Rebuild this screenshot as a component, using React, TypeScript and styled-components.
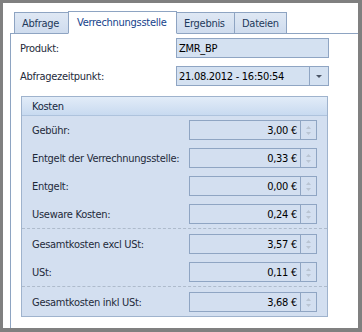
import React from "react";
import styled, { createGlobalStyle } from "styled-components";

const FONT = `"DejaVu Sans Condensed", "DejaVu Sans", sans-serif`;

const Global = createGlobalStyle`
  html, body { margin: 0; padding: 0; background: #ffffff; }
  body { font-family: ${FONT}; font-size: 11px; letter-spacing: -0.28px; }
`;

const Frame = styled.div`
  width: 362px;
  height: 332px;
  box-sizing: border-box;
  border-style: solid;
  border-color: #808080;
  border-width: 3px 4px 4px 3px;
  background: #ffffff;
  overflow: hidden;
  display: flex;
  flex-direction: column;
  padding: 8px 0 0 7px;
`;

const TabStrip = styled.div`
  display: flex;
  align-items: flex-end;
  padding-left: 4px;
  height: 22px;
  position: relative;
  z-index: 1;
`;

const Tab = styled.div<{ $active?: boolean; $w: number }>`
  box-sizing: border-box;
  height: ${(p) => (p.$active ? 23 : 21)}px;
  width: ${(p) => p.$w}px;
  margin-right: -1px;
  border: 1px solid #8ea4c2;
  border-bottom: ${(p) => (p.$active ? "1px solid #ffffff" : "none")};
  background: ${(p) =>
    p.$active ? "#ffffff" : "linear-gradient(#dfe8f4, #cfdcee)"};
  color: ${(p) => (p.$active ? "#15428b" : "#1e395b")};
  padding-left: ${(p) => (p.$active ? 8 : 7)}px;
  display: flex;
  align-items: center;
  white-space: nowrap;
  margin-bottom: ${(p) => (p.$active ? -1 : 0)}px;
  position: relative;
  z-index: ${(p) => (p.$active ? 2 : 1)};
`;

const Panel = styled.div`
  flex: 1;
  border-top: 1px solid #8ea4c2;
  border-left: 1px solid #8ea4c2;
  margin-right: -2px;
  padding: 4px 31px 0 9px;
  display: flex;
  flex-direction: column;
`;

const FormRow = styled.div`
  display: flex;
  align-items: center;
  height: 20px;
  margin-bottom: 8px;
`;

const Label = styled.div<{ $w: number }>`
  width: ${(p) => p.$w}px;
  color: #1e2a3a;
  white-space: nowrap;
`;

const TextBox = styled.div`
  flex: 1;
  height: 20px;
  box-sizing: border-box;
  border: 1px solid #8fa5c3;
  background: #d4e1f1;
  color: #000;
  display: flex;
  align-items: center;
  padding-left: 2px;
`;

const ComboText = styled.div`
  flex: 1;
`;

const DropButton = styled.div`
  width: 18px;
  height: 100%;
  border-left: 1px solid #8fa5c3;
  display: flex;
  align-items: center;
  justify-content: center;
`;

const Group = styled.div`
  margin-top: 2px;
  margin-left: 1px;
  margin-right: 1px;
  border: 1px solid #9fb3cd;
  background: #d3dff0;
  display: flex;
  flex-direction: column;
  padding-bottom: 4px;
`;

const GroupHeader = styled.div`
  height: 18px;
  border-bottom: 1px solid #aec3dd;
  background: linear-gradient(#e2ecf8, #c8daf0);
  color: #15283e;
  padding-left: 10px;
  display: flex;
  align-items: center;
  margin-bottom: 4px;
`;

const CostRow = styled.div<{ $tight?: boolean }>`
  display: flex;
  align-items: center;
  height: 20px;
  padding: 0 10px;
  margin-bottom: ${(p) => (p.$tight ? 0 : 8)}px;
`;

const CostLabel = styled.div`
  flex: 1;
  color: #1e2a3a;
  white-space: nowrap;
`;

const Separator = styled.div`
  border-top: 1px dashed #aebbcc;
  margin: 4px 0 5px;
`;

const SpinEdit = styled.div`
  width: 128px;
  height: 20px;
  box-sizing: border-box;
  border: 1px solid #8fa5c3;
  display: flex;
  align-items: center;
`;

const SpinValue = styled.div`
  flex: 1;
  text-align: right;
  padding-right: 3px;
  color: #000;
`;

const SpinButton = styled.div`
  width: 15px;
  height: 100%;
  border-left: 1px solid #8fa5c3;
  display: flex;
  flex-direction: column;
  align-items: center;
  justify-content: center;
  gap: 3px;
`;

const Arrow = ({ up, color, w }: { up?: boolean; color: string; w: number }) => {
  const h = Math.ceil(w / 2);
  return (
    <svg width={w} height={h} viewBox={`0 0 ${w} ${h}`}>
      {up ? (
        <polygon points={`0,${h} ${w},${h} ${w / 2},0`} fill={color} />
      ) : (
        <polygon points={`0,0 ${w},0 ${w / 2},${h}`} fill={color} />
      )}
    </svg>
  );
};

type Cost = { label: string; value: string; sepAfter?: boolean };

const costs: Cost[] = [
  { label: "Gebühr:", value: "3,00 €" },
  { label: "Entgelt der Verrechnungsstelle:", value: "0,33 €" },
  { label: "Entgelt:", value: "0,00 €" },
  { label: "Useware Kosten:", value: "0,24 €", sepAfter: true },
  { label: "Gesamtkosten excl USt:", value: "3,57 €" },
  { label: "USt:", value: "0,11 €", sepAfter: true },
  { label: "Gesamtkosten inkl USt:", value: "3,68 €" },
];

export default function App() {
  return (
    <>
      <Global />
      <Frame>
        <TabStrip>
          <Tab $w={55}>Abfrage</Tab>
          <Tab $w={109} $active>
            Verrechnungsstelle
          </Tab>
          <Tab $w={59}>Ergebnis</Tab>
          <Tab $w={53}>Dateien</Tab>
        </TabStrip>
        <Panel>
          <FormRow>
            <Label $w={156}>Produkt:</Label>
            <TextBox>ZMR_BP</TextBox>
          </FormRow>
          <FormRow>
            <Label $w={156}>Abfragezeitpunkt:</Label>
            <TextBox>
              <ComboText>21.08.2012 - 16:50:54</ComboText>
              <DropButton>
                <Arrow color="#4a5566" w={6} />
              </DropButton>
            </TextBox>
          </FormRow>
          <Group>
            <GroupHeader>Kosten</GroupHeader>
            {costs.map((c, i) => (
              <React.Fragment key={c.label}>
                <CostRow $tight={c.sepAfter || i === costs.length - 1}>
                  <CostLabel>{c.label}</CostLabel>
                  <SpinEdit>
                    <SpinValue>{c.value}</SpinValue>
                    <SpinButton>
                      <Arrow up color="#b9c4d2" w={5} />
                      <Arrow color="#b9c4d2" w={5} />
                    </SpinButton>
                  </SpinEdit>
                </CostRow>
                {c.sepAfter && <Separator />}
              </React.Fragment>
            ))}
          </Group>
        </Panel>
      </Frame>
    </>
  );
}
